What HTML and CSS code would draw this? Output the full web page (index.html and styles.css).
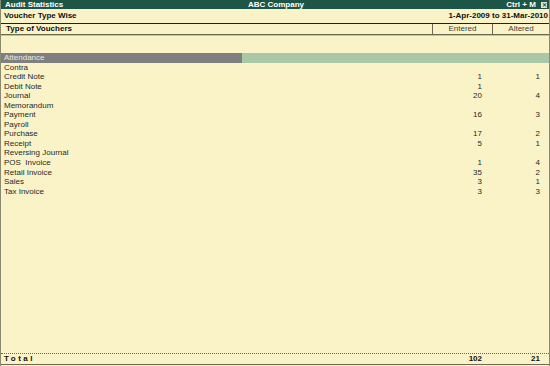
FILE: index.html
```html
<!DOCTYPE html>
<html lang="en">
<head>
    <meta charset="UTF-8">
    <title>Audit Statistics</title>
    <link rel="stylesheet" href="styles.css">
</head>
<body>
<div class="screen">
    <!-- Title bar -->
    <div class="titlebar">
        <span class="tb-left">Audit Statistics</span>
        <span class="tb-center">ABC Company</span>
        <span class="tb-right">Ctrl + M <span class="closebox">&#x2715;</span></span>
    </div>

    <!-- Report heading -->
    <div class="heading">
        <span>Voucher Type Wise</span>
        <span>1-Apr-2009 to 31-Mar-2010</span>
    </div>

    <!-- Column heads -->
    <div class="colheads">
        <div class="c-name">Type of Vouchers</div>
        <div class="c-num">Entered</div>
        <div class="c-num">Altered</div>
    </div>

    <div class="body">
        <div class="row selected">
            <div class="c-name">Attendance</div>
            <div class="c-num"></div>
            <div class="c-num"></div>
        </div>
        <div class="row"><div class="c-name">Contra</div><div class="c-num"></div><div class="c-num"></div></div>
        <div class="row"><div class="c-name">Credit Note</div><div class="c-num">1</div><div class="c-num">1</div></div>
        <div class="row"><div class="c-name">Debit Note</div><div class="c-num">1</div><div class="c-num"></div></div>
        <div class="row"><div class="c-name">Journal</div><div class="c-num">20</div><div class="c-num">4</div></div>
        <div class="row"><div class="c-name">Memorandum</div><div class="c-num"></div><div class="c-num"></div></div>
        <div class="row"><div class="c-name">Payment</div><div class="c-num">16</div><div class="c-num">3</div></div>
        <div class="row"><div class="c-name">Payroll</div><div class="c-num"></div><div class="c-num"></div></div>
        <div class="row"><div class="c-name">Purchase</div><div class="c-num">17</div><div class="c-num">2</div></div>
        <div class="row"><div class="c-name">Receipt</div><div class="c-num">5</div><div class="c-num">1</div></div>
        <div class="row"><div class="c-name">Reversing Journal</div><div class="c-num"></div><div class="c-num"></div></div>
        <div class="row"><div class="c-name">POS&nbsp; Invoice</div><div class="c-num">1</div><div class="c-num">4</div></div>
        <div class="row"><div class="c-name">Retail Invoice</div><div class="c-num">35</div><div class="c-num">2</div></div>
        <div class="row"><div class="c-name">Sales</div><div class="c-num">3</div><div class="c-num">1</div></div>
        <div class="row"><div class="c-name">Tax Invoice</div><div class="c-num">3</div><div class="c-num">3</div></div>
    </div>

    <!-- Totals -->
    <div class="total">
        <div class="c-name">Total</div>
        <div class="c-num">102</div>
        <div class="c-num">21</div>
    </div>
</div>
</body>
</html>
```

FILE: styles.css
```css
body {
    margin: 0;
    font-family: "Liberation Sans", Arial, sans-serif;
    font-size: 8px;
    color: #282828;
    background-color: #fbf3c8;
}
.screen {
    width: 550px;
    height: 366px;
    display: flex;
    flex-direction: column;
    border-left: 1px solid #8a8a70;
    border-right: 1px solid #8a8a70;
    box-sizing: border-box;
}
.titlebar {
    height: 9px;
    background-color: #1d5546;
    color: #fff;
    font-weight: bold;
    font-size: 8px;
    line-height: 9px;
    display: flex;
    padding: 0 2px 0 4px;
}
.tb-left, .tb-right {
    flex: 1;
}
.tb-right {
    text-align: right;
}
.closebox {
    display: inline-block;
    width: 6px;
    height: 6px;
    line-height: 6px;
    font-size: 6px;
    text-align: center;
    background-color: #dfe3df;
    color: #1d5546;
    margin-left: 3px;
}
.heading {
    height: 14px;
    line-height: 14px;
    display: flex;
    justify-content: space-between;
    font-weight: bold;
    font-size: 8px;
    color: #101010;
    padding: 0 1px 0 3px;
    border-bottom: 1px solid #202020;
}
.colheads, .row, .total {
    display: flex;
}
.c-name {
    flex: 1;
    padding-left: 3px;
}
.c-num {
    text-align: right;
}
.colheads {
    height: 10px;
    line-height: 10px;
    border-bottom: 1px solid #6a6a50;
    box-shadow: 0 1px 0 #c8c0a0;
}
.colheads .c-name {
    font-weight: bold;
    padding-left: 5px;
    color: #101010;
}
.colheads .c-num {
    text-align: center;
    border-left: 1px solid #6a6a50;
    color: #404040;
}
.colheads .c-num:nth-child(2) {
    width: 59px;
}
.colheads .c-num:nth-child(3) {
    width: 56px;
}
.body {
    flex: 1;
    padding-top: 18px;
}
.row {
    height: 9.55px;
    line-height: 9.55px;
}
.row .c-num:nth-child(2),
.total .c-num:nth-child(2) {
    width: 50px;
    padding-right: 10px;
}
.row .c-num:nth-child(3),
.total .c-num:nth-child(3) {
    width: 48px;
    padding-right: 9px;
}
.row.selected {
    background-color: #a9c9a6;
    color: #e8e8e8;
}
.row.selected .c-name {
    flex: 0 0 238px;
    background-color: #7f7f7f;
    margin-right: auto;
}
.total {
    height: 10px;
    line-height: 10px;
    font-weight: bold;
    color: #101010;
    border-top: 1px dotted #6a6a50;
    border-bottom: 1px solid #6a6a50;
    margin-bottom: 1px;
}
.total .c-name {
    letter-spacing: 2.5px;
}
```
